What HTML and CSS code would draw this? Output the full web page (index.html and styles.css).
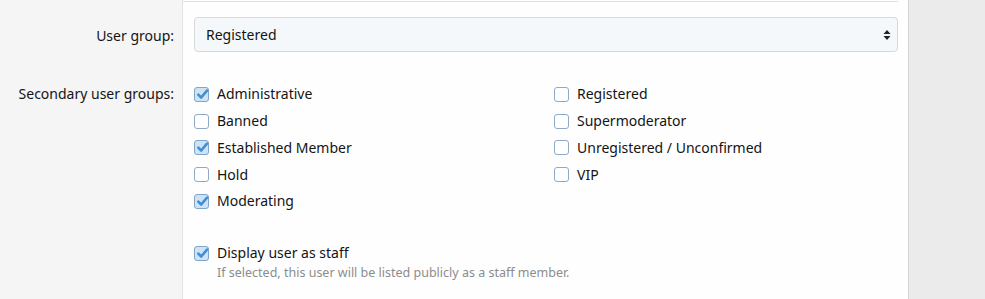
FILE: index.html
```html
<!DOCTYPE html>
<html>
<head>
<meta charset="utf-8">
<link rel="stylesheet" href="styles.css">
</head>
<body>
<div class="page">
  <div class="block">
    <div class="row row-top">
      <div class="label-col"></div>
      <div class="field-col"><div class="sep"></div></div>
    </div>
    <div class="row">
      <div class="label-col"><span class="label lbl-select">User group:</span></div>
      <div class="field-col">
        <div class="select">
          <span>Registered</span>
          <svg class="arrows" width="8" height="12" viewBox="0 0 8 12"><path d="M4 1 L7.5 5 H0.5 Z M4 11 L7.5 7 H0.5 Z" fill="#222"/></svg>
        </div>
      </div>
    </div>
    <div class="row row-groups">
      <div class="label-col"><span class="label lbl-check">Secondary user groups:</span></div>
      <div class="field-col">
        <div class="cols">
          <ul class="list">
            <li><span class="cb on"><svg viewBox="0 0 15 15"><path d="M3.3 7.6 L6.2 10.5 L12 3.6" fill="none" stroke="#3f8fd2" stroke-width="2.6" stroke-linecap="round" stroke-linejoin="round"/></svg></span>Administrative</li>
            <li><span class="cb"></span>Banned</li>
            <li><span class="cb on"><svg viewBox="0 0 15 15"><path d="M3.3 7.6 L6.2 10.5 L12 3.6" fill="none" stroke="#3f8fd2" stroke-width="2.6" stroke-linecap="round" stroke-linejoin="round"/></svg></span>Established Member</li>
            <li><span class="cb"></span>Hold</li>
            <li><span class="cb on"><svg viewBox="0 0 15 15"><path d="M3.3 7.6 L6.2 10.5 L12 3.6" fill="none" stroke="#3f8fd2" stroke-width="2.6" stroke-linecap="round" stroke-linejoin="round"/></svg></span>Moderating</li>
          </ul>
          <ul class="list">
            <li><span class="cb"></span>Registered</li>
            <li><span class="cb"></span>Supermoderator</li>
            <li><span class="cb"></span>Unregistered / Unconfirmed</li>
            <li><span class="cb"></span>VIP</li>
          </ul>
        </div>
        <div class="staff">
          <div class="staff-line"><span class="cb on"><svg viewBox="0 0 15 15"><path d="M3.3 7.6 L6.2 10.5 L12 3.6" fill="none" stroke="#3f8fd2" stroke-width="2.6" stroke-linecap="round" stroke-linejoin="round"/></svg></span>Display user as staff</div>
          <div class="hint">If selected, this user will be listed publicly as a staff member.</div>
        </div>
      </div>
    </div>
  </div>
</div>
</body>
</html>
```

FILE: styles.css
```css
html, body {
  margin: 0;
  padding: 0;
  height: 100%;
}
body {
  background: #ebebeb;
  font-family: "Noto Sans", "Open Sans", "DejaVu Sans", sans-serif;
  font-size: 14px;
  color: #141414;
}
.page {
  height: 100%;
}
.block {
  width: 908px;
  height: 100%;
  background: #fefefe;
  border-right: 1px solid #d3d3d3;
  display: flex;
  flex-direction: column;
}
.row {
  display: grid;
  grid-template-columns: 183px 1fr;
}
.row-groups {
  flex: 1;
}
.label-col {
  background: #f5f5f5;
  border-right: 1px solid #e3e3e3;
  text-align: right;
  padding-right: 8px;
}
.field-col {
  padding: 0 10px 0 11px;
}
.row-top .label-col,
.row-top .field-col {
  height: 2px;
}
.row-top .field-col {
  padding-left: 0;
}
.sep {
  height: 1px;
  margin-top: 1px;
  background: #e2e2e2;
}
.label {
  display: block;
  line-height: 20px;
}
.lbl-select {
  padding-top: 24px;
}
.lbl-check {
  padding-top: 32px;
}
.select {
  margin-top: 15px;
  height: 33px;
  border: 1px solid #d8d8d8;
  border-radius: 4px;
  background: #f5f8fb;
  display: flex;
  align-items: center;
  justify-content: space-between;
  padding: 0 6px 0 11px;
  font-size: 14px;
}
.arrows {
  display: block;
}
.cols {
  display: grid;
  grid-template-columns: 360px 1fr;
  padding-top: 29px;
}
.list {
  list-style: none;
  margin: 0;
  padding: 0;
}
.list li, .staff-line {
  display: flex;
  align-items: center;
  height: 26.75px;
  line-height: 20px;
  font-size: 14px;
}
.cb {
  width: 13px;
  height: 13px;
  border: 1px solid #8eaac6;
  border-radius: 3px;
  background: #fff;
  margin-right: 8px;
  position: relative;
  flex: none;
}
.cb.on {
  background: #cfe3f4;
  border-color: #7fa6ca;
}
.cb svg {
  position: absolute;
  left: 0;
  top: -1px;
  width: 15px;
  height: 15px;
}
.staff {
  padding-top: 25px;
}
.hint {
  padding-left: 23px;
  font-size: 12.5px;
  color: #8c8c8c;
  line-height: 16px;
  margin-top: -2px;
}
```
